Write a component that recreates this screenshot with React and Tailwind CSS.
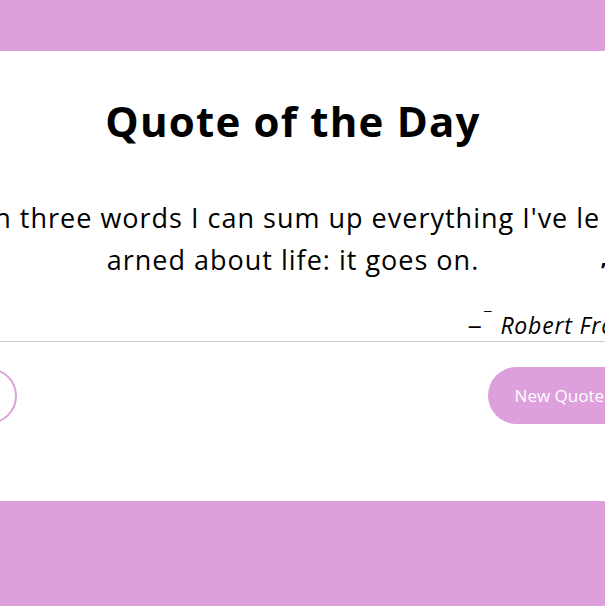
// App.jsx — quote of the day card
export default function App() {
    return (
        <div className="w-[605px] h-[606px] overflow-hidden flex flex-col bg-[#dda0dd] font-['Open_Sans',sans-serif] text-black">
            <div className="h-[51px] shrink-0" />

            {/* White card (wider than the window) */}
            <div className="h-[450px] shrink-0 bg-white overflow-hidden">
                <div className="w-[720px] -ml-[67px] flex flex-col items-center">
                    <h1 className="mt-[42px] text-[42px] leading-[56px] font-bold tracking-[1.2px]">
                        Quote of the Day
                    </h1>

                    <div className="relative w-full mt-[48px]">
                        <p className="text-center text-[27px] leading-[42px] tracking-[1px]">
                            In three words I can sum up everything I've le
                            <br />
                            arned about life: it goes on.
                        </p>
                        <span className="absolute left-[668px] top-[61px] text-[22px] leading-none font-bold">”</span>
                    </div>

                    <div className="w-full flex justify-end pr-[19px] mt-[32px]">
                        <p className="text-[23px] leading-[24px] tracking-[0.8px]">
                            <span className="inline-block scale-x-125">–</span>
                            <span className="relative -top-[11px] text-[15px] ml-[3px] mr-[8px]">¯</span>
                            <span className="italic">Robert Frost</span>
                        </p>
                    </div>

                    <div className="w-full h-px bg-[#cccccc] mt-[1px]" />

                    <div className="w-full flex items-center justify-between mt-[25px] pl-[28px] pr-[22px]">
                        <button className="w-[56px] h-[56px] rounded-full border-2 border-[#dda0dd] bg-white" />
                        <button className="h-[57px] px-[27px] rounded-full bg-[#dda0dd] text-white text-[17px]">
                            New Quote
                        </button>
                    </div>
                </div>
            </div>

            <div className="flex-1" />
        </div>
    );
}
